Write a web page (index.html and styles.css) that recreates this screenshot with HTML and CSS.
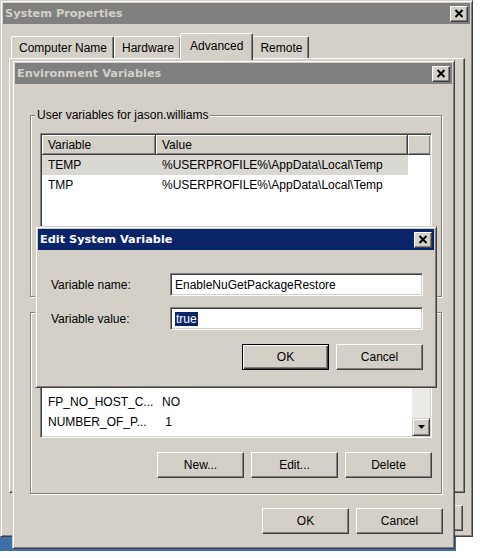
FILE: index.html
```html
<!DOCTYPE html>
<html>
<head>
<meta charset="utf-8">
<title>System Properties</title>
<link rel="stylesheet" href="styles.css">
</head>
<body>
<div class="screen">
  <div class="wallpaper"></div>

  <section class="win sysprops">
    <header class="titlebar inactive">
      <span class="title">System Properties</span>
      <span class="close"><svg width="10" height="9" viewBox="0 0 10 9"><path d="M1.5 1 L8.5 8 M8.5 1 L1.5 8" stroke="#000" stroke-width="2" fill="none"/></svg></span>
    </header>
    <div class="sys-body">
      <div class="tabs">
        <div class="tab">Computer Name</div>
        <div class="tab">Hardware</div>
        <div class="tab active">Advanced</div>
        <div class="tab">Remote</div>
      </div>
      <div class="tabpanel"></div>
      <div class="btnrow sys-btns">
        <button class="btn"></button>
        <button class="btn"></button>
        <button class="btn"></button>
      </div>
    </div>
  </section>

  <section class="win envvars">
    <header class="titlebar inactive">
      <span class="title">Environment Variables</span>
      <span class="close"><svg width="10" height="9" viewBox="0 0 10 9"><path d="M1.5 1 L8.5 8 M8.5 1 L1.5 8" stroke="#000" stroke-width="2" fill="none"/></svg></span>
    </header>
    <div class="env-body">
      <fieldset class="group">
        <legend>User variables for jason.williams</legend>
        <div class="listview">
          <div class="lv-main">
            <div class="lv-header"><span class="hcell">Variable</span><span class="hcell">Value</span><span class="hcell fill"></span></div>
            <div class="lv-row selected"><span class="cell">TEMP</span><span class="cell">%USERPROFILE%\AppData\Local\Temp</span></div>
            <div class="lv-row"><span class="cell">TMP</span><span class="cell">%USERPROFILE%\AppData\Local\Temp</span></div>
          </div>
        </div>
        <div class="btnrow">
          <button class="btn"></button>
          <button class="btn"></button>
          <button class="btn"></button>
        </div>
      </fieldset>

      <fieldset class="group second">
        <legend class="blank"></legend>
        <div class="listview">
          <div class="lv-main">
            <div class="lv-header"><span class="hcell"></span><span class="hcell"></span><span class="hcell fill"></span></div>
            <div class="lv-row"><span class="cell"></span><span class="cell"></span></div>
            <div class="lv-row"><span class="cell"></span><span class="cell"></span></div>
            <div class="lv-row"><span class="cell">FP_NO_HOST_C...</span><span class="cell">NO</span></div>
            <div class="lv-row"><span class="cell">NUMBER_OF_P...</span><span class="cell">&nbsp;1</span></div>
          </div>
          <div class="vscroll">
            <div class="sb-btn"><svg width="7" height="4" viewBox="0 0 7 4"><path d="M3.5 0 L7 4 L0 4 Z" fill="#000"/></svg></div>
            <div class="sb-thumb"></div>
            <div class="sb-track"></div>
            <div class="sb-btn"><svg width="7" height="4" viewBox="0 0 7 4"><path d="M0 0 L7 0 L3.5 4 Z" fill="#000"/></svg></div>
          </div>
        </div>
        <div class="btnrow">
          <button class="btn">New...</button>
          <button class="btn">Edit...</button>
          <button class="btn">Delete</button>
        </div>
      </fieldset>

      <div class="btnrow dialog-btns">
        <button class="btn">OK</button>
        <button class="btn">Cancel</button>
      </div>
    </div>
  </section>

  <section class="win editvar">
    <header class="titlebar active">
      <span class="title">Edit System Variable</span>
      <span class="close"><svg width="10" height="9" viewBox="0 0 10 9"><path d="M1.5 1 L8.5 8 M8.5 1 L1.5 8" stroke="#000" stroke-width="2" fill="none"/></svg></span>
    </header>
    <div class="edit-body">
      <div class="form">
        <label class="lbl">Variable name:</label>
        <div class="input">EnableNuGetPackageRestore</div>
        <label class="lbl">Variable value:</label>
        <div class="input"><span class="sel">true</span></div>
      </div>
      <div class="btnrow edit-btns">
        <button class="btn default">OK</button>
        <button class="btn">Cancel</button>
      </div>
    </div>
  </section>
</div>
</body>
</html>
```

FILE: styles.css
```css
* { box-sizing: border-box; }

html, body {
  margin: 0;
  padding: 0;
  background: #ffffff;
}

body {
  font-family: "Liberation Sans", Arial, sans-serif;
  font-size: 12px;
  color: #000;
}

.screen {
  position: relative;
  width: 480px;
  height: 558px;
  overflow: hidden;
  background: #ffffff;
}

.wallpaper {
  position: absolute;
  left: 0;
  top: 0;
  width: 456px;
  height: 551px;
  background: #3d6fa8;
}

/* ---------- windows ---------- */
.win {
  position: absolute;
  display: flex;
  flex-direction: column;
  background: #d4d0c8;
  border: 1px solid;
  border-color: #d4d0c8 #404040 #404040 #d4d0c8;
  box-shadow: inset 1px 1px #ffffff, inset -1px -1px #808080;
  padding: 2px;
}

.sysprops {
  left: 0;
  top: 0;
  width: 473px;
  height: 537px;
  overflow: hidden;
}

.envvars {
  left: 12px;
  top: 60px;
  width: 443px;
}

.editvar {
  left: 35px;
  top: 226px;
  width: 402px;
}

.titlebar {
  height: 21px;
  display: flex;
  align-items: center;
  justify-content: space-between;
  padding: 0 2px 0 2px;
  flex: none;
}

.titlebar .title {
  font-family: "DejaVu Sans", Verdana, sans-serif;
  font-weight: bold;
  font-size: 11.3px;
  white-space: nowrap;
}

.titlebar.inactive { background: #808080; }
.titlebar.inactive .title { color: #d4d0c8; }
.titlebar.active { background: #0a246a; }
.titlebar.active .title { color: #ffffff; }

.close {
  width: 18px;
  height: 16px;
  background: #d4d0c8;
  border: 1px solid;
  border-color: #ffffff #404040 #404040 #ffffff;
  box-shadow: inset -1px -1px #808080;
  display: flex;
  align-items: center;
  justify-content: center;
}

/* ---------- buttons ---------- */
.btnrow {
  display: flex;
  justify-content: flex-end;
  gap: 7px;
}

.btn {
  width: 87px;
  height: 26px;
  padding: 0;
  font-family: "Liberation Sans", Arial, sans-serif;
  font-size: 12px;
  color: #000;
  background: #d4d0c8;
  border: 1px solid;
  border-color: #ffffff #404040 #404040 #ffffff;
  box-shadow: inset -1px -1px #808080;
}

.btn.default {
  border: 1px solid #000;
  box-shadow: inset 1px 1px #ffffff, inset -1px -1px #404040, inset -2px -2px #808080;
}

/* ---------- system properties ---------- */
.sys-body {
  display: flex;
  flex-direction: column;
  padding: 9px 5px 0 6px;
}

.tabs {
  height: 25px;
  display: flex;
  align-items: flex-end;
  padding-left: 2px;
}

.tab {
  height: 22px;
  padding: 0 6px 0 7px;
  display: flex;
  align-items: center;
  white-space: nowrap;
  background: #d4d0c8;
  border-top: 1px solid #ffffff;
  border-left: 1px solid #ffffff;
  border-right: 1px solid #404040;
  box-shadow: inset -1px 0 #808080;
  border-radius: 2px 2px 0 0;
}

.tab.active {
  position: relative;
  z-index: 1;
  height: 27px;
  margin: 0 -1px -2px -1px;
  padding: 0 9px 3px 9px;
}

.tabpanel {
  height: 435px;
  background: #d4d0c8;
  border: 1px solid;
  border-color: #ffffff #404040 #404040 #ffffff;
  box-shadow: inset -1px -1px #808080;
}

.sys-btns {
  margin-top: 12px;
  padding-right: 2px;
}

/* ---------- environment variables ---------- */
.env-body {
  display: flex;
  flex-direction: column;
  padding: 24px 10px 12px 15px;
}

.group {
  margin: 0;
  padding: 11px 9px 15px 9px;
  border: 1px solid #808080;
  box-shadow: inset 1px 1px #ffffff, 1px 1px #ffffff;
  min-inline-size: 0;
}

.group.second { margin-top: 8px; }

.group legend {
  font-size: 12px;
  line-height: 14px;
  height: 14px;
  padding: 0 2px;
  margin-left: -5px;
  background: #d4d0c8;
}

.group legend.blank { width: 100px; }

.listview {
  height: 108px;
  display: flex;
  background: #ffffff;
  border: 1px solid;
  border-color: #808080 #ffffff #ffffff #808080;
  box-shadow: inset 1px 1px #404040, inset -1px -1px #d4d0c8;
  padding: 1px;
  overflow: hidden;
}

.lv-main {
  flex: 1;
  min-width: 0;
}

.lv-header {
  display: grid;
  grid-template-columns: 114px 252px 1fr;
  height: 20px;
}

.hcell {
  display: flex;
  align-items: center;
  padding-left: 6px;
  background: #d4d0c8;
  border-right: 1px solid #404040;
  border-bottom: 1px solid #404040;
  box-shadow: inset 1px 1px #ffffff, inset -1px -1px #808080;
  white-space: nowrap;
}

.hcell.fill { border-right: none; }

.lv-row {
  display: grid;
  grid-template-columns: 114px 252px;
  width: 366px;
  height: 20px;
}

.lv-row.selected { background: #dad8d3; }

.cell {
  line-height: 20px;
  padding-left: 6px;
  white-space: nowrap;
  overflow: hidden;
}

.vscroll {
  width: 18px;
  display: flex;
  flex-direction: column;
  background: #ecebe8;
}

.sb-btn {
  height: 18px;
  flex: none;
  display: flex;
  align-items: center;
  justify-content: center;
  background: #d4d0c8;
  border: 1px solid;
  border-color: #d4d0c8 #404040 #404040 #d4d0c8;
  box-shadow: inset 1px 1px #ffffff, inset -1px -1px #808080;
}

.sb-thumb {
  height: 14px;
  flex: none;
  background: #d4d0c8;
  border: 1px solid;
  border-color: #d4d0c8 #404040 #404040 #d4d0c8;
  box-shadow: inset 1px 1px #ffffff, inset -1px -1px #808080;
}

.sb-track { flex: 1; }

.group .btnrow { margin-top: 14px; }

.dialog-btns {
  margin-top: 14px;
  margin-right: -1px;
}

/* ---------- edit dialog ---------- */
.edit-body {
  display: flex;
  flex-direction: column;
  padding: 23px 11px 15px 13px;
}

.form {
  display: grid;
  grid-template-columns: 119px 253px;
  row-gap: 11px;
  align-items: center;
}

.lbl { white-space: nowrap; }

.input {
  height: 23px;
  display: flex;
  align-items: center;
  padding: 0 4px;
  background: #ffffff;
  border: 1px solid;
  border-color: #808080 #ffffff #ffffff #808080;
  box-shadow: inset 1px 1px #404040, inset -1px -1px #d4d0c8;
  white-space: nowrap;
}

.sel {
  background: #0a246a;
  color: #ffffff;
  line-height: 14px;
  padding: 0 1px;
}

.edit-btns { margin-top: 14px; }
```
